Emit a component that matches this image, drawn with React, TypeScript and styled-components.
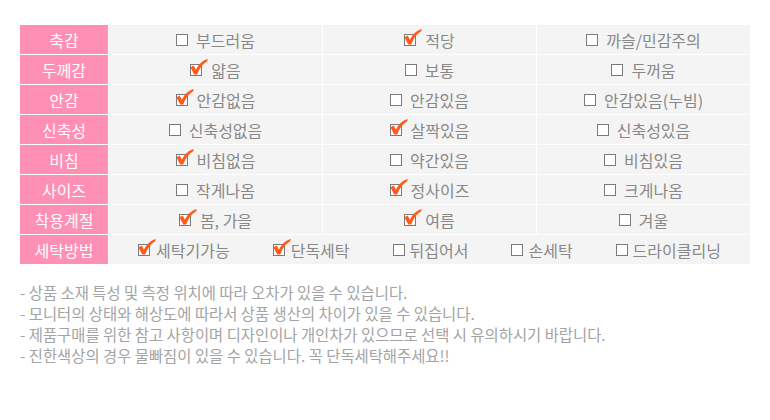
import React from "react";
import styled, { createGlobalStyle } from "styled-components";

const GlobalStyle = createGlobalStyle`
  body {
    margin: 0;
    background: #fff;
    font-family: "Noto Sans CJK KR", "Noto Sans", sans-serif;
  }
`;

const Page = styled.div`
  width: 730px;
  padding: 25px 20px 0;
`;

const Table = styled.div`
  display: grid;
  grid-template-columns: 88px repeat(3, 1fr);
  grid-auto-rows: 29px;
  gap: 1px;
  background: #fff;
`;

const Head = styled.div`
  display: flex;
  align-items: center;
  justify-content: center;
  background: #ff8fb4;
  color: #fff;
  font-size: 16px;
`;

const Cell = styled.div<{ $span?: number }>`
  display: flex;
  align-items: center;
  justify-content: center;
  gap: 43px;
  background: #f4f4f4;
  grid-column: span ${(p) => p.$span ?? 1};
`;

const Option = styled.span<{ $gap: number }>`
  display: inline-flex;
  align-items: center;
  gap: ${(p) => p.$gap}px;
  color: #888;
  font-size: 16px;
  white-space: nowrap;
`;

const Notes = styled.ul`
  list-style: none;
  margin: 18px 0 0;
  padding: 0;
  color: #a3a3a3;
  font-size: 15.4px;
  line-height: 21px;
`;

const Box = () => (
  <svg width="12" height="12" viewBox="0 0 12 12">
    <rect x="0.5" y="0.5" width="11" height="11" fill="#fff" stroke="#7a7a7a" />
  </svg>
);

const CheckedBox = () => (
  <svg width="18" height="17" viewBox="0 0 18 17" style={{ marginTop: -4 }}>
    <rect x="0.5" y="5.5" width="11" height="11" fill="#fff" stroke="#7a7a7a" />
    <path
      d="M0.4 8.2 L3.8 6.6 L5.9 10.8 C8.2 5.8 11.6 2 17.8 0 L17.2 2.2 C12.8 4.6 9.6 9 7.2 15.6 L4.2 15.6 Z"
      fill="#ff5a1a"
    />
  </svg>
);

type Opt = { label: string; on?: boolean };

const Choice = ({ label, on, tight }: Opt & { tight?: boolean }) => {
  const gap = tight ? (on ? 0 : 5) : on ? 3 : 8;
  return (
    <Option $gap={gap}>
      {on ? <CheckedBox /> : <Box />}
      {label}
    </Option>
  );
};

const rows: { title: string; opts: Opt[] }[] = [
  { title: "축감", opts: [{ label: "부드러움" }, { label: "적당", on: true }, { label: "까슬/민감주의" }] },
  { title: "두께감", opts: [{ label: "얇음", on: true }, { label: "보통" }, { label: "두꺼움" }] },
  { title: "안감", opts: [{ label: "안감없음", on: true }, { label: "안감있음" }, { label: "안감있음(누빔)" }] },
  { title: "신축성", opts: [{ label: "신축성없음" }, { label: "살짝있음", on: true }, { label: "신축성있음" }] },
  { title: "비침", opts: [{ label: "비침없음", on: true }, { label: "약간있음" }, { label: "비침있음" }] },
  { title: "사이즈", opts: [{ label: "작게나옴" }, { label: "정사이즈", on: true }, { label: "크게나옴" }] },
  { title: "착용계절", opts: [{ label: "봄, 가을", on: true }, { label: "여름", on: true }, { label: "겨울" }] },
];

const washing: Opt[] = [
  { label: "세탁기가능", on: true },
  { label: "단독세탁", on: true },
  { label: "뒤집어서" },
  { label: "손세탁" },
  { label: "드라이클리닝" },
];

const notes = [
  "- 상품 소재 특성 및 측정 위치에 따라 오차가 있을 수 있습니다.",
  "- 모니터의 상태와 해상도에 따라서 상품 생산의 차이가 있을 수 있습니다.",
  "- 제품구매를 위한 참고 사항이며 디자인이나 개인차가 있으므로 선택 시 유의하시기 바랍니다.",
  "- 진한색상의 경우 물빠짐이 있을 수 있습니다. 꼭 단독세탁해주세요!!",
];

export default function App() {
  return (
    <Page>
      <GlobalStyle />
      <Table>
        {rows.map((r) => (
          <React.Fragment key={r.title}>
            <Head>{r.title}</Head>
            {r.opts.map((o) => (
              <Cell key={o.label}>
                <Choice {...o} />
              </Cell>
            ))}
          </React.Fragment>
        ))}
        <Head>세탁방법</Head>
        <Cell $span={3}>
          {washing.map((o) => (
            <Choice key={o.label} {...o} tight />
          ))}
        </Cell>
      </Table>
      <Notes>
        {notes.map((n) => (
          <li key={n}>{n}</li>
        ))}
      </Notes>
    </Page>
  );
}
